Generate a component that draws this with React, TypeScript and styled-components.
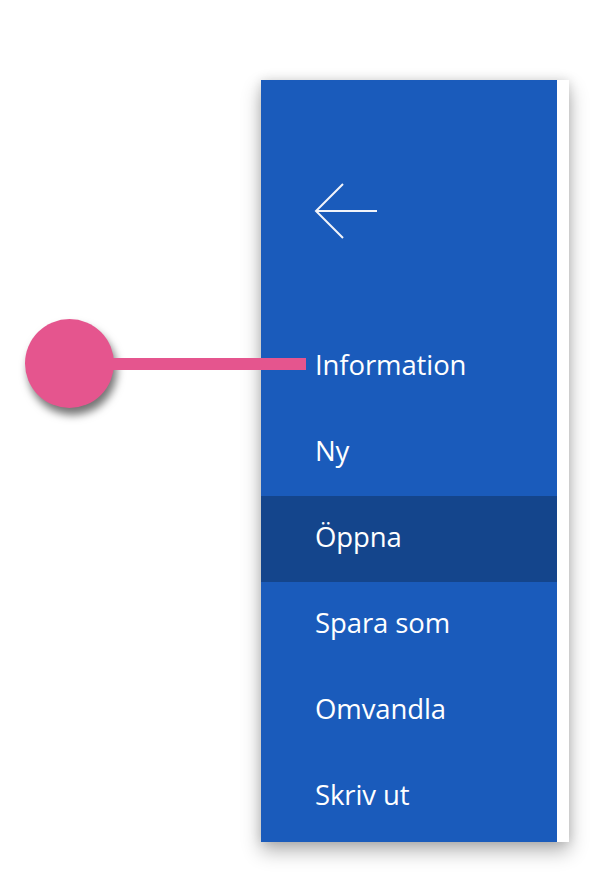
import styled, { createGlobalStyle } from 'styled-components';

const GlobalStyle = createGlobalStyle`
  html, body {
    margin: 0;
    padding: 0;
    background: #ffffff;
  }
`;

const Page = styled.div`
  position: relative;
  width: 593px;
  height: 874px;
  padding: 80px 0 0 261px;
  box-sizing: border-box;
  font-family: 'Open Sans', 'Noto Sans', 'Liberation Sans', sans-serif;
`;

const Card = styled.div`
  width: 308px;
  background: #ffffff;
  box-shadow: 0 9px 18px rgba(0, 0, 0, 0.3), 0 0 10px rgba(0, 0, 0, 0.12);
`;

const Nav = styled.nav`
  width: 296px;
  background: #1a5bbb;
  display: flex;
  flex-direction: column;
  padding-bottom: 2px;
`;

const BackArea = styled.div`
  height: 244px;
  display: flex;
  align-items: center;
  padding-left: 53px;
  box-sizing: border-box;
`;

const BackIcon = styled.svg`
  display: block;
  margin-top: 18px;
`;

const Item = styled.div<{ $active?: boolean }>`
  height: 86px;
  display: flex;
  align-items: center;
  padding: 0 0 5px 54px;
  box-sizing: border-box;
  background: ${({ $active }) => ($active ? '#14458c' : 'transparent')};
  color: #ffffff;
  font-size: 27.5px;
  letter-spacing: -0.1px;
  line-height: 1;
`;

const Callout = styled.div`
  position: absolute;
  left: 25px;
  top: 319px;
  display: flex;
  align-items: center;
`;

const Dot = styled.div`
  width: 89px;
  height: 89px;
  border-radius: 50%;
  background: #e5558e;
  box-shadow: 3px 7px 9px rgba(0, 0, 0, 0.55);
  flex-shrink: 0;
`;

const Line = styled.div`
  width: 194px;
  height: 12px;
  margin-left: -2px;
  margin-top: 1px;
  background: #e5558e;
`;

const items = ['Information', 'Ny', 'Öppna', 'Spara som', 'Omvandla', 'Skriv ut'];

export default function App(): React.ReactElement {
  return (
    <>
      <GlobalStyle />
      <Page>
        <Card>
          <Nav>
            <BackArea>
              <BackIcon width="64" height="58" viewBox="0 0 64 58">
                <polyline
                  points="29,2 2,29 29,56"
                  fill="none"
                  stroke="#f2f4fa"
                  strokeWidth="2"
                />
                <line x1="2" y1="29" x2="63" y2="29" stroke="#f2f4fa" strokeWidth="2" />
              </BackIcon>
            </BackArea>
            {items.map((label) => (
              <Item key={label} $active={label === 'Öppna'}>
                {label}
              </Item>
            ))}
          </Nav>
        </Card>
        <Callout>
          <Dot />
          <Line />
        </Callout>
      </Page>
    </>
  );
}
